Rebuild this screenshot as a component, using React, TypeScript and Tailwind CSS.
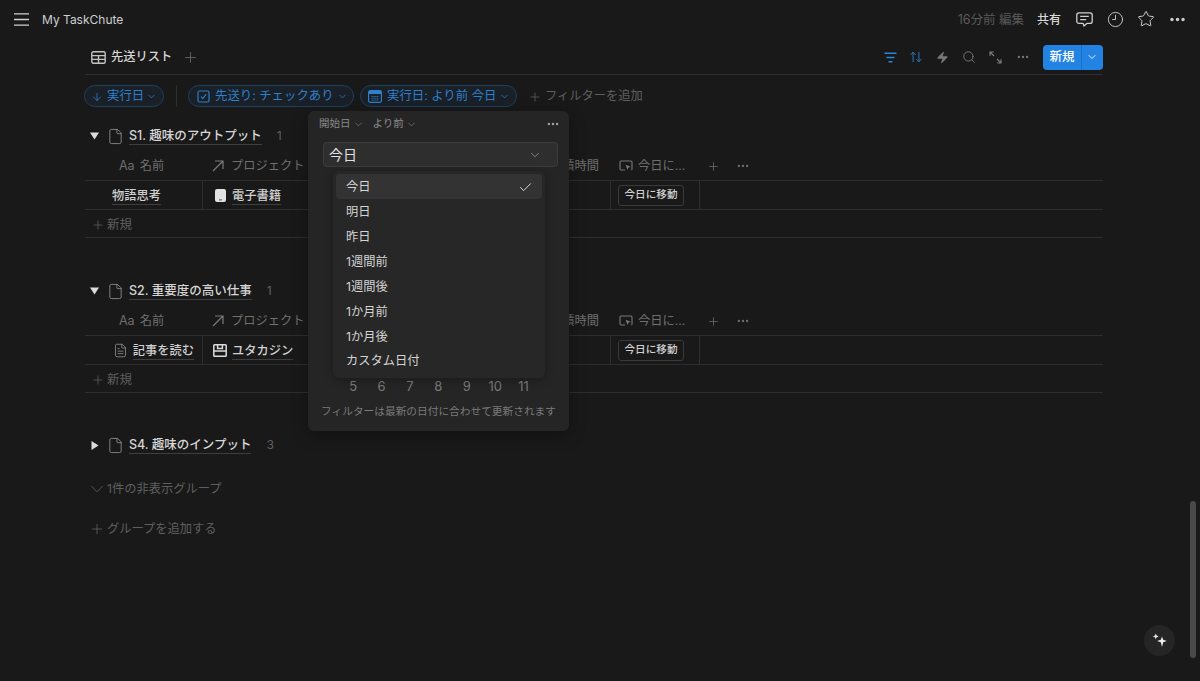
import {
  ArrowDown,
  ArrowUpDown,
  Check,
  ChevronDown,
  Clock9,
  Ellipsis,
  File,
  FileText,
  Plus,
  Search,
  Star,
  Zap,
} from "lucide-react";

const menuItems = ["今日", "明日", "昨日", "1週間前", "1週間後", "1か月前", "1か月後", "カスタム日付"];
const calendarDays = [5, 6, 7, 8, 9, 10, 11];

function HamburgerIcon() {
  return (
    <svg width="15" height="13" viewBox="0 0 15 13" fill="none" stroke="#cfcfcf" strokeWidth="1.3">
      <path d="M0 0.8h15M0 6.5h15M0 12.2h15" />
    </svg>
  );
}

function ChatIcon() {
  return (
    <svg width="17" height="15" viewBox="0 0 17 15" fill="none" stroke="#cfcfcf" strokeWidth="1.3" strokeLinejoin="round">
      <path d="M3 0.8h11A2.2 2.2 0 0 1 16.2 3v6.2a2.2 2.2 0 0 1-2.2 2.2h-3.2L8 14l-.9-2.6H3A2.2 2.2 0 0 1 .8 9.2V3A2.2 2.2 0 0 1 3 .8z" />
      <path d="M4.2 4.4h8.6M4.2 7.6h6" />
    </svg>
  );
}

function TableIcon() {
  return (
    <svg width="15" height="13" viewBox="0 0 15 13" fill="none" stroke="#c4c4c4" strokeWidth="1.4">
      <rect x="0.8" y="0.8" width="13.4" height="11.4" rx="1.5" />
      <path d="M1 4.6h13M1 8.4h13M7.5 4.6v7.6" />
    </svg>
  );
}

function FilterIcon() {
  return (
    <svg width="13" height="11" viewBox="0 0 13 11" fill="none" stroke="#2f83d4" strokeWidth="1.4" strokeLinecap="round">
      <path d="M1 1.2h11M3 5.5h7M5 9.8h3" />
    </svg>
  );
}

function ExpandIcon() {
  return (
    <svg width="13" height="13" viewBox="0 0 13 13" fill="none" stroke="#7a7a7a" strokeWidth="1.2">
      <path d="M1 4.8V1h3.8M1 1l4 4M12 8.2V12H8.2M12 12L8 8" />
    </svg>
  );
}

function RelationArrowIcon() {
  return (
    <svg width="12" height="12" viewBox="0 0 12 12" fill="none" stroke="#7a7a7a" strokeWidth="1.2">
      <path d="M1 11L11 1M3 1h8v8" />
    </svg>
  );
}

function CheckboxIcon() {
  return (
    <svg width="13" height="13" viewBox="0 0 13 13" fill="none" stroke="#2e7fcc" strokeWidth="1.2">
      <rect x="1" y="1" width="11" height="11" rx="1.5" />
      <path d="M4 6.7l1.8 1.9L9.2 4.2" />
    </svg>
  );
}

function CalendarIcon() {
  return (
    <svg width="14" height="13" viewBox="0 0 14 13">
      <rect x="0.6" y="0.6" width="12.8" height="11.8" rx="1.8" fill="none" stroke="#2e7fcc" strokeWidth="1.2" />
      <rect x="0.6" y="0.6" width="12.8" height="3.4" rx="1.2" fill="#2e7fcc" />
      <path d="M3.5 6.5h7M3.5 8.3h7M3.5 10.1h7" stroke="#2e7fcc" strokeWidth="0.9" strokeDasharray="1.2 0.7" />
    </svg>
  );
}

function BookIcon() {
  return (
    <svg width="11" height="13" viewBox="0 0 11 13">
      <rect x="0" y="0" width="11" height="13" rx="2" fill="#e2e2e2" />
      <rect x="4" y="10.4" width="3" height="1" fill="#555" />
    </svg>
  );
}

function PanelIcon() {
  return (
    <svg width="14" height="13" viewBox="0 0 14 13" fill="none" stroke="#dcdcdc" strokeWidth="1.5">
      <rect x="0.8" y="0.8" width="12.4" height="11.4" rx="0.8" />
      <path d="M1 7h12M4.6 1v3.4h4.8V1" />
    </svg>
  );
}

function CursorBoxIcon() {
  return (
    <svg width="14" height="12" viewBox="0 0 14 12" fill="none">
      <path d="M6 10H2.2A1.2 1.2 0 0 1 1 8.8V2.2A1.2 1.2 0 0 1 2.2 1h9.6A1.2 1.2 0 0 1 13 2.2v6.6A1.2 1.2 0 0 1 12.4 10" stroke="#7a7a7a" strokeWidth="1.1" />
      <path d="M6.6 4.8l5 2-2.2.9-.9 2.3z" fill="#7a7a7a" />
    </svg>
  );
}

function SparkleIcon() {
  return (
    <svg width="16" height="15" viewBox="0 0 16 15" fill="#ececec">
      <path d="M10 3.6l1.2 3.2L14.8 8l-3.6 1.2L10 14l-1.2-4.8L5 8l3.8-1.2z" />
      <path d="M3.8 0.4l.8 2.2 2.2.8-2.2.8-.8 2.2-.8-2.2L.8 3.4l2.2-.8z" />
    </svg>
  );
}

function Triangle({ open }: { open: boolean }) {
  return open ? (
    <svg width="9" height="8" viewBox="0 0 9 8" fill="#dcdcdc">
      <path d="M0 0.5h9L4.5 7.5z" />
    </svg>
  ) : (
    <svg width="8" height="9" viewBox="0 0 8 9" fill="#dcdcdc">
      <path d="M0.5 0v9L7.5 4.5z" />
    </svg>
  );
}

function GroupHeader({ title, count, open }: { title: string; count: number; open: boolean }) {
  return (
    <div className="flex h-[26px] items-center pt-[2px]">
      <div className="flex w-[19px] justify-center">
        <Triangle open={open} />
      </div>
      <File size={17} strokeWidth={1.1} className="ml-[3px] text-[#9a9a9a]" />
      <span className="ml-[5px] border-b border-[#3e3e3e] text-[12.5px] leading-[17px] font-medium text-[#d6d6d6]">{title}</span>
      <span className="ml-[15px] text-[12.25px] text-[#5f5f5f]">{count}</span>
    </div>
  );
}

function GroupTable({ name, project, nameIcon, projectIcon }: { name: string; project: string; nameIcon?: React.ReactNode; projectIcon: React.ReactNode }) {
  return (
    <div className="text-[12.25px]">
      <div className="flex h-[33px] items-center border-b border-[#2e2e2e] pt-[4px] text-[#6f6f6f]">
        <div className="w-[118px] pl-[34px]">
          <span className="text-[12.5px]">Aa</span>
          <span className="ml-[5px]">名前</span>
        </div>
        <div className="flex w-[208px] items-center gap-[7px] pl-[9px]">
          <RelationArrowIcon />
          プロジェクト
        </div>
        <div className="w-[200px] pr-[12px] text-right">見積時間</div>
        <div className="flex w-[89px] items-center gap-[5px] pl-[8px]">
          <CursorBoxIcon />
          今日に...
        </div>
        <Plus size={13} strokeWidth={1.4} className="ml-[7px]" />
        <Ellipsis size={14} strokeWidth={2} className="ml-[16px]" />
      </div>
      <div className="flex h-[29px] items-center border-b border-[#2e2e2e]">
        <div className="flex h-full w-[118px] items-center justify-end border-r border-[#2e2e2e] pr-[8px]">
          <div className={nameIcon ? "flex items-center gap-[5px]" : "pr-[33px]"}>
            {nameIcon}
            <span className="mt-[2px] block border-b border-[#3e3e3e] font-medium leading-[16px] text-[#d0d0d0]">{name}</span>
          </div>
        </div>
        <div className="flex w-[208px] items-center gap-[5px] pl-[10px]">
          <div className="flex w-[14px] justify-center">{projectIcon}</div>
          <span className="mt-[2px] border-b border-[#3e3e3e] font-medium leading-[16px] text-[#d0d0d0]">{project}</span>
        </div>
        <div className="h-full w-[200px] border-r border-[#2e2e2e]" />
        <div className="flex h-full w-[89px] items-center border-r border-[#2e2e2e] pl-[7px]">
          <span className="flex h-[21px] w-[66px] items-center justify-center rounded-[3px] border border-[#3a3a3a] text-[10.6px] font-medium text-[#d0d0d0]">今日に移動</span>
        </div>
      </div>
      <div className="flex h-[28px] items-center gap-[2px] border-b border-[#2e2e2e] pl-[6px] pt-[3px] text-[12.5px] text-[#5f5f5f]">
        <Plus size={14} strokeWidth={1.3} />
        新規
      </div>
    </div>
  );
}

function FilterPopover() {
  return (
    <div className="absolute left-[308px] top-[111px] flex h-[320px] w-[261px] flex-col rounded-[6px] bg-[#252525] shadow-[0_4px_16px_rgba(0,0,0,0.35)]">
      <div className="flex h-[25px] items-center pl-[11px] pr-[9px] pt-[1px] text-[10.5px] text-[#8a8a8a]">
        <span>開始日</span>
        <ChevronDown size={11} strokeWidth={1.3} className="ml-[2px]" />
        <span className="ml-[9px]">より前</span>
        <ChevronDown size={11} strokeWidth={1.3} className="ml-[2px]" />
        <Ellipsis size={14} strokeWidth={2.2} className="ml-auto text-[#a0a0a0]" />
      </div>
      <div className="ml-[15px] mr-[11px] mt-[6px] flex h-[25px] items-center justify-between rounded-[4px] border border-[#3c3c3c] bg-[#2e2e2e] pl-[5px] pr-[15px] text-[14px] text-[#e0e0e0]">
        今日
        <ChevronDown size={14} strokeWidth={1.3} className="text-[#a0a0a0]" />
      </div>
      <div className="mt-[210px] flex pl-[31px] text-[13px] text-[#7a7a7a]">
        {calendarDays.map((day) => (
          <span key={day} className="w-[28.4px] text-center">{day}</span>
        ))}
      </div>
      <div className="mt-[6px] text-center text-[10.7px] leading-[18px] text-[#7a7a7a]">フィルターは最新の日付に合わせて更新されます</div>
      <div className="absolute left-[25px] top-[60px] h-[207px] w-[212px] rounded-[6px] bg-[#272727] px-[3px] pt-[3px] shadow-[0_2px_10px_rgba(0,0,0,0.3)]">
        {menuItems.map((item, i) => (
          <div key={item} className={`flex h-[24.9px] items-center justify-between rounded-[4px] pl-[10px] pr-[9px] pt-[2px] text-[12.25px] text-[#d4d4d4] ${i === 0 ? "bg-[#333333]" : ""}`}>
            {item}
            {i === 0 && <Check size={15} strokeWidth={1.5} className="text-[#e0e0e0]" />}
          </div>
        ))}
      </div>
    </div>
  );
}

export default function App() {
  return (
    <div className="relative h-[681px] w-[1200px] overflow-hidden bg-[#191919] font-['Inter','Noto_Sans_CJK_JP',sans-serif]">
      {/* top bar */}
      <div className="flex h-[38px] items-center pl-[14px] pr-[13px]">
        <HamburgerIcon />
        <span className="ml-[13px] pt-[2px] text-[12px] text-[#cfcfcf]">My TaskChute</span>
        <span className="ml-auto pt-[2px] text-[12.5px] text-[#5a5a5a]">16分前 編集</span>
        <span className="ml-[13px] pt-[2px] text-[12px] font-medium text-[#d8d8d8]">共有</span>
        <div className="ml-[15px]">
          <ChatIcon />
        </div>
        <Clock9 size={17} strokeWidth={1.3} className="ml-[14px] text-[#cfcfcf]" />
        <Star size={18} strokeWidth={1.3} className="ml-[13px] text-[#cfcfcf]" />
        <Ellipsis size={19} strokeWidth={2.4} className="ml-[13px] text-[#cfcfcf]" />
      </div>

      <div className="ml-[85px] w-[1018px]">
        {/* view tabs */}
        <div className="flex h-[37px] items-center border-b border-[#2e2e2e] pl-[6px] pt-[2px]">
          <TableIcon />
          <span className="ml-[5px] pt-[1px] text-[12.25px] font-medium text-[#d6d6d6]">先送リスト</span>
          <Plus size={17} strokeWidth={1.1} className="ml-[10px] text-[#707070]" />
          <div className="ml-auto flex items-center">
            <div className="flex w-[26px] justify-center">
              <FilterIcon />
            </div>
            <div className="flex w-[26px] justify-center">
              <ArrowUpDown size={14} strokeWidth={1.5} className="text-[#2f83d4]" />
            </div>
            <div className="flex w-[27px] justify-center">
              <Zap size={13} fill="#7a7a7a" strokeWidth={1} className="text-[#7a7a7a]" />
            </div>
            <div className="flex w-[26px] justify-center">
              <Search size={14} strokeWidth={1.6} className="text-[#7a7a7a]" />
            </div>
            <div className="flex w-[27px] justify-center">
              <ExpandIcon />
            </div>
            <div className="flex w-[27px] justify-center">
              <Ellipsis size={14} strokeWidth={2} className="text-[#7a7a7a]" />
            </div>
            <div className="ml-[7px] flex h-[25px] w-[60px] items-center overflow-hidden rounded-[4px] bg-[#2383e2] text-[12.5px] font-medium text-white">
              <span className="flex h-full w-[39px] items-center justify-center border-r border-[#1b6fc2]">新規</span>
              <ChevronDown size={12} strokeWidth={1.8} className="ml-[4px]" />
            </div>
          </div>
        </div>

        {/* filters */}
        <div className="-ml-[1px] flex h-[42px] items-center text-[12.4px] text-[#2e7fcc]">
          <div className="flex h-[22px] w-[80px] items-center gap-[2px] rounded-full border border-[#1d3f5e] bg-[#1a2027] pl-[6px] pt-[1px]">
            <ArrowDown size={12} strokeWidth={1.6} className="mr-[2px]" />
            実行日
            <ChevronDown size={11} strokeWidth={1.6} />
          </div>
          <div className="ml-[12px] h-[22px] w-px bg-[#2e2e2e]" />
          <div className="ml-[11px] flex h-[22px] w-[166px] items-center gap-[3px] rounded-full border border-[#1d3f5e] bg-[#1a2027] pl-[8px] pt-[1px]">
            <span className="mr-[2px]">
              <CheckboxIcon />
            </span>
            先送り: チェックあり
            <ChevronDown size={11} strokeWidth={1.6} />
          </div>
          <div className="ml-[6px] flex h-[22px] w-[157px] items-center gap-[3px] rounded-full border border-[#1d3f5e] bg-[#1a2027] pl-[7px] pt-[1px]">
            <span className="mr-[2px]">
              <CalendarIcon />
            </span>
            実行日: より前 今日
            <ChevronDown size={11} strokeWidth={1.6} />
          </div>
          <div className="ml-[11px] flex items-center gap-[3px] pt-[1px] text-[12.25px] text-[#5f5f5f]">
            <Plus size={14} strokeWidth={1.3} />
            フィルターを追加
          </div>
        </div>

        {/* groups */}
        <div className="pt-[5px]">
          <GroupHeader title="S1. 趣味のアウトプット" count={1} open />
          <GroupTable name="物語思考" project="電子書籍" projectIcon={<BookIcon />} />
        </div>
        <div className="pt-[39px]">
          <GroupHeader title="S2. 重要度の高い仕事" count={1} open />
          <GroupTable
            name="記事を読む"
            project="ユタカジン"
            nameIcon={<FileText size={15} strokeWidth={1.2} className="text-[#9a9a9a]" />}
            projectIcon={<PanelIcon />}
          />
        </div>
        <div className="pt-[38px]">
          <GroupHeader title="S4. 趣味のインプット" count={3} open={false} />
        </div>
        <div className="mt-[19px] flex h-[24px] items-center gap-[3px] pl-[4px] pt-[2px] text-[12.25px] text-[#5f5f5f]">
          <ChevronDown size={22} strokeWidth={0.9} className="-mx-[3.5px]" />
          1件の非表示グループ
        </div>
        <div className="mt-[16px] flex h-[24px] items-center gap-[2px] pl-[4px] pt-[2px] text-[12.25px] text-[#5f5f5f]">
          <Plus size={16} strokeWidth={1.2} />
          グループを追加する
        </div>
      </div>

      <FilterPopover />

      {/* scrollbar */}
      <div className="absolute left-[1190px] top-[501px] h-[157px] w-[6px] rounded-full bg-[#4a4a4a]" />

      {/* ai button */}
      <div className="absolute left-[1144px] top-[625px] flex h-[31px] w-[31px] items-center justify-center rounded-full bg-[#252525]">
        <SparkleIcon />
      </div>
    </div>
  );
}
